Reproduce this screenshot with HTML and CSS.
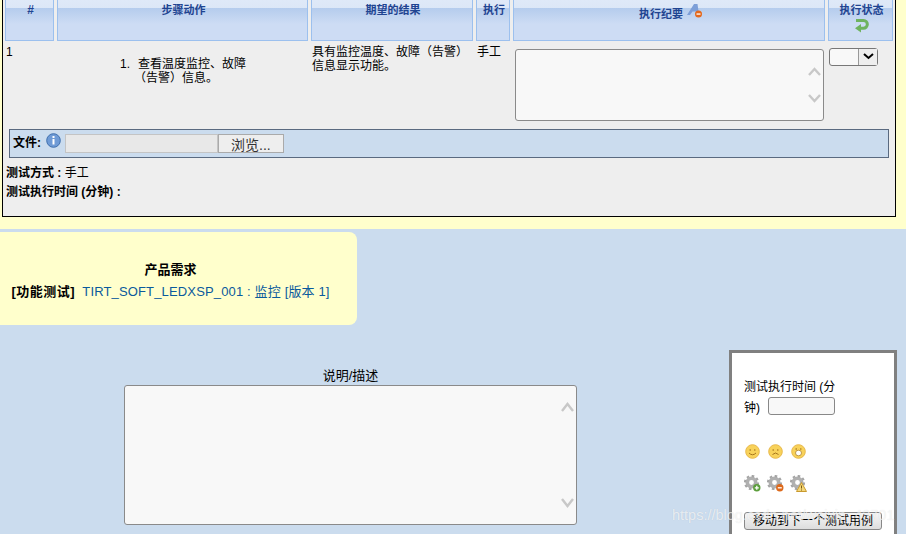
FILE: index.html
```html
<!DOCTYPE html>
<html lang="zh">
<head>
<meta charset="utf-8">
<title>测试执行</title>
<link rel="stylesheet" href="styles.css">
</head>
<body>
<section class="top">
  <div class="box">
    <div class="grid">
      <div class="th th-hash">#</div>
      <div class="th">步骤动作</div>
      <div class="th">期望的结果</div>
      <div class="th">执行</div>
      <div class="th th-notes">执行纪要
        <svg class="ico-a" width="16" height="14" viewBox="0 0 16 14"><path d="M0 11 L7 0 H10.500 L12 11 H9.500 L9 7.500 H5.500 L3 11Z" fill="#7d9fd8"/><circle cx="11.500" cy="10" r="3.500" fill="#e4681c"/><rect x="9.500" y="9.400" width="4" height="1.300" fill="#fff"/></svg>
      </div>
      <div class="th th-status">执行状态
        <svg class="ico-r" width="15" height="15" viewBox="0 0 15 15"><path d="M2 2.500 H9.500 A3.800 3.800 0 0 1 9.500 10.200 H6" fill="none" stroke="#6fb35f" stroke-width="3"/><path d="M7 6 L1 10.200 L7 14.500Z" fill="#6fb35f"/></svg>
      </div>
      <div class="td num">1</div>
      <div class="td steps"><ol><li>查看温度监控、故障（告警）信息。</li></ol></div>
      <div class="td result">具有监控温度、故障（告警）信息显示功能。</div>
      <div class="td mode">手工</div>
      <div class="td notes"><div class="ta ta-small"><svg class="chev" width="13" height="36" viewBox="0 0 13 36"><path d="M1 8 L6.500 2 L12 8"/><path d="M1 28 L6.500 34 L12 28"/></svg></div></div>
      <div class="td status"><div class="sel"><span class="sel-btn"><svg width="11" height="7" viewBox="0 0 11 7"><path d="M1 1 L5.500 5 L10 1" fill="none" stroke="#000" stroke-width="2"/></svg></span></div></div>
    </div>
    <div class="file">
      <b>文件:</b>
      <svg class="ico-i" width="15" height="15" viewBox="0 0 15 15"><circle cx="7.500" cy="7.500" r="6.800" fill="#6f9bd6" stroke="#3f6fae"/><rect x="6.500" y="3" width="2" height="2" fill="#fff"/><rect x="6.500" y="6" width="2" height="5.500" fill="#fff"/></svg>
      <span class="file-path"></span><span class="file-btn">浏览...</span>
    </div>
    <p class="meta"><b>测试方式 :</b> 手工</p>
    <p class="meta"><b>测试执行时间 (分钟) :</b></p>
  </div>
</section>
<section class="req">
  <div class="req-title">产品需求</div>
  <div class="req-line"><span class="req-type">[功能测试]</span>&nbsp; <a class="req-link">TIRT_SOFT_LEDXSP_001 : 监控 [版本 1]</a></div>
</section>
<section class="lower">
  <div class="desc">
    <div class="desc-label">说明/描述</div>
    <div class="ta ta-big"><svg class="chev" width="13" height="106" viewBox="0 0 13 106"><path d="M1 9 L6.500 2 L12 9"/><path d="M1 97 L6.500 104 L12 97"/></svg></div>
  </div>
  <aside class="side">
    <div class="side-time">测试执行时间 (分钟) <span class="time-input"></span></div>
    <div class="icons faces">
      <svg width="15" height="15" viewBox="0 0 15 15"><circle cx="7.500" cy="7.500" r="6.800" fill="#f8d25a" stroke="#e8b84a"/><circle cx="5.200" cy="6" r=".8" fill="#a5751c"/><circle cx="9.800" cy="6" r=".8" fill="#a5751c"/><path d="M4 9 Q7.500 12.500 11 9" fill="none" stroke="#a5751c"/></svg>
      <svg width="15" height="15" viewBox="0 0 15 15"><circle cx="7.500" cy="7.500" r="6.800" fill="#f8d25a" stroke="#e8b84a"/><circle cx="5.200" cy="6" r=".8" fill="#a5751c"/><circle cx="9.800" cy="6" r=".8" fill="#a5751c"/><path d="M4.500 10.500 Q7.500 7.500 10.500 10.500" fill="none" stroke="#a5751c"/></svg>
      <svg width="15" height="15" viewBox="0 0 15 15"><circle cx="7.500" cy="7.500" r="6.800" fill="#f8d25a" stroke="#e8b84a"/><circle cx="5.200" cy="5" r=".8" fill="#a5751c"/><circle cx="9.800" cy="5" r=".8" fill="#a5751c"/><ellipse cx="7.500" cy="9" rx="3" ry="2.800" fill="#fff" stroke="#a5751c" stroke-width=".7"/></svg>
    </div>
    <div class="icons gears">
      <svg width="17" height="17" viewBox="0 0 17 17"><circle cx="7.500" cy="7.500" r="4.200" fill="none" stroke="#b0b0b0" stroke-width="3.600"/><circle cx="7.500" cy="7.500" r="6.600" fill="none" stroke="#a4a4a4" stroke-width="2" stroke-dasharray="2.600 2.580"/><circle cx="12.800" cy="12.800" r="3.700" fill="#5c9e3c"/><path d="M10.800 12.800 H14.800 M12.800 10.800 V14.800" stroke="#fff" stroke-width="1.300"/></svg>
      <svg width="17" height="17" viewBox="0 0 17 17"><circle cx="7.500" cy="7.500" r="4.200" fill="none" stroke="#b0b0b0" stroke-width="3.600"/><circle cx="7.500" cy="7.500" r="6.600" fill="none" stroke="#a4a4a4" stroke-width="2" stroke-dasharray="2.600 2.580"/><circle cx="12.800" cy="12.800" r="3.700" fill="#dd6a1c"/><path d="M10.800 12.800 H14.800" stroke="#fff" stroke-width="1.300"/></svg>
      <svg width="17" height="17" viewBox="0 0 17 17"><circle cx="7.500" cy="7.500" r="4.200" fill="none" stroke="#b0b0b0" stroke-width="3.600"/><circle cx="7.500" cy="7.500" r="6.600" fill="none" stroke="#a4a4a4" stroke-width="2" stroke-dasharray="2.600 2.580"/><path d="M11.500 7.500 L16.500 16.500 H6.500Z" fill="#f3d67a" stroke="#c99a2e"/><path d="M11.500 10.500 V13.500 M11.500 14.500 V15.500" stroke="#7a5a10"/></svg>
    </div>
    <div class="next-btn">移动到下一个测试用例</div>
  </aside>
</section>
<div class="watermark">https://blog.csdn.net/weixin_43701</div>
</body>
</html>
```
FILE: styles.css
```css
html, body { margin: 0; padding: 0; }
body {
  width: 906px; height: 534px; overflow: hidden; position: relative;
  background: #cbdcee; color: #000;
  font: 12px/14px "Liberation Sans", "Noto Sans CJK SC", sans-serif;
}
.top { background: #ffc; height: 229px; padding: 0 10px 0 2px; box-sizing: border-box; }
.box {
  width: 894px; height: 217px; box-sizing: border-box;
  background: #eee; border: 1px solid #000; border-top: 0;
  padding: 0 2px;
}
.grid {
  display: grid;
  grid-template-columns: 49px 251px 162px 34px 312px 65px;
  grid-template-rows: 40.500px 88px;
  column-gap: 3px;
}
.th {
  box-sizing: border-box; border: 1px solid #9cc0ee; border-top: 0;
  background: linear-gradient(#dfe9f8 0, #dce7f7 8px, #b5cced 8px, #cddcf4 24px, #cddcf4 100%);
  color: #1f4491; font-weight: bold; font-size: 11px; line-height: 13px;
  text-align: center; padding: 4px 0 0 2px;
}
.th-hash { font-size: 12px; }
.th-notes { padding: 8px 16px 0 0; position: relative; }
.ico-a { position: absolute; left: 173px; top: 4px; }
.ico-r { display: block; margin: 1px auto 0; }
.td { padding-top: 4px; }
.num { padding-left: 1px; }
.steps { padding: 16px 57px 0 44px; text-align: center; }
.steps ol { margin: 0; padding: 0; list-style: none; text-indent: 14px; }
.steps li::before { content: "1."; display: inline-block; width: 18px; text-align: left; text-indent: 0; }
.result { padding-left: 1px; }
.mode { margin-left: 1px; white-space: nowrap; }
.notes { padding: 8px 0 0 2px; }
.ta {
  box-sizing: border-box; background: #f8f8f8;
  border: 1px solid #8a8a8a; border-radius: 3px; position: relative;
}
.ta-small { width: 309px; height: 72px; }
.chev { position: absolute; right: 2px; fill: none; stroke: #c8c8c8; stroke-width: 2.400; }
.ta-small .chev { top: 17px; }
.ta-big .chev { top: 16px; }
.status { padding: 7px 0 0 1px; }
.sel {
  width: 49px; height: 18px; box-sizing: border-box;
  background: #f8f8f8; border: 1px solid #777; border-radius: 3px; position: relative;
}
.sel-btn {
  position: absolute; right: 0; top: 0; width: 18px; height: 16px;
  background: #eee; border-left: 1px solid #999;
  display: flex; align-items: center; justify-content: center;
}
.file {
  box-sizing: border-box; margin: 0 4px 0 4px; height: 29px; width: 880px;
  background: #cbdcee; border: 1px solid #5a6a80;
  display: flex; align-items: center; padding-left: 3px;
}
.file b { margin-right: 5px; }
.ico-i { margin: -6px 4px 0 0; }
.file-path { width: 151px; height: 17px; background: #e8e8e8; border: 1px solid #c4c4c4; }
.file-btn {
  box-sizing: border-box; width: 66px; height: 19px; line-height: 20px; text-align: left; padding-left: 12px;
  font-size: 14px; color: #333; background: #eee; border: 1px solid #aaa;
}
.meta { margin: 0 0 0 1px; height: 19px; line-height: 18px; }
.file + .meta { margin-top: 6px; }
.req {
  width: 357px; height: 93px; box-sizing: border-box; margin-top: 3px; padding: 31px 16px 0 0;
  background: #ffc; border-radius: 0 8px 8px 0; text-align: center;
}
.req-title { font-weight: bold; font-size: 13px; line-height: 14px; }
.req-line { margin-top: 7px; font-size: 13px; line-height: 16px; white-space: nowrap; }
.req-type { font-weight: bold; letter-spacing: .5px; }
.req-link { color: #0a5a9c; letter-spacing: .15px; }
.lower { display: flex; padding-top: 43px; }
.desc { margin-left: 124px; width: 453px; text-align: center; }
.desc-label { height: 17px; font-size: 13px; line-height: 15px; box-sizing: border-box; }
.ta-big { height: 140px; width: 453px; }
.side {
  position: absolute; left: 729px; top: 350px; width: 168px; height: 190px;
  box-sizing: border-box; background: #fff; border: 3px solid #808080; padding: 25px 12px 0;
}
.side-time { width: 106px; height: 38px; line-height: 19px; }
.time-input {
  display: inline-block; width: 65px; height: 16px; vertical-align: -3px; margin-left: 5px;
  background: #f8f8f8; border: 1px solid #888; border-radius: 3px;
}
.icons { display: flex; }
.faces { margin: 28px 0 0 1px; gap: 8px; }
.gears { margin-top: 16px; gap: 6px; }
.next-btn {
  margin-top: 20px; width: 138px; height: 18px; box-sizing: border-box; line-height: 16px;
  text-align: center; border: 1px solid #888; border-radius: 3px;
  background: linear-gradient(#f6f6f6, #ddd);
}
.watermark {
  position: absolute; left: 672px; top: 507px; font-size: 14.500px; line-height: 17px;
  color: rgba(255,255,255,.68); text-shadow: 0 0 1px rgba(0,0,0,.12); white-space: nowrap;
}
```
